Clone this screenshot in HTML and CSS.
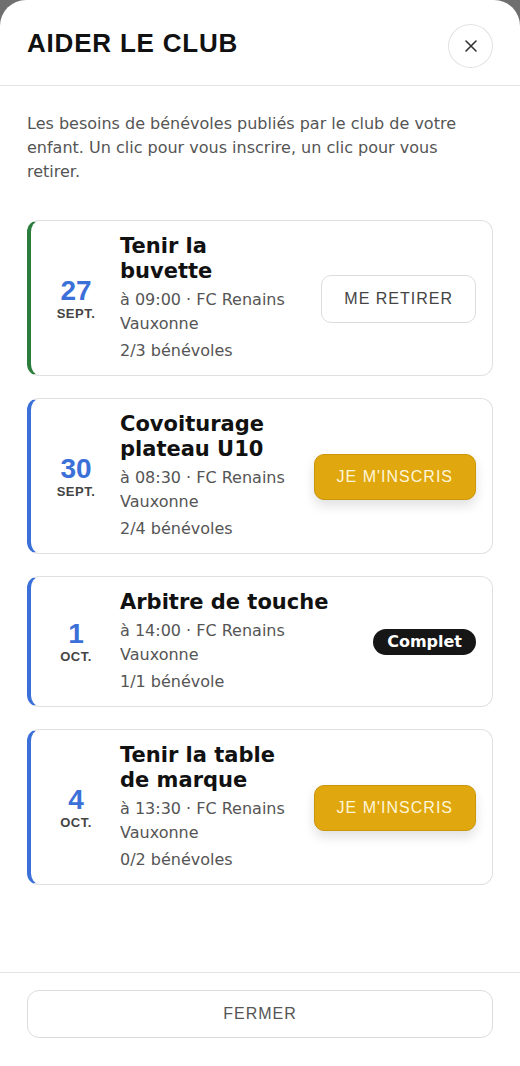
FILE: index.html
```html
<!DOCTYPE html>
<html lang="fr">
  <head>
    <meta charset="UTF-8" />
    <meta name="viewport" content="width=device-width, initial-scale=1" />
    <title>Aider le club</title>
    <link rel="stylesheet" href="styles.css">
  </head>
  <body>
    <div class="sheet">
      <div class="sheet-header">
        <h1>AIDER LE CLUB</h1>
        <button class="close-btn" aria-label="Fermer">
          <svg width="14" height="14" viewBox="0 0 14 14"><path d="M2 2L12 12M12 2L2 12" stroke="#333" stroke-width="1.6" stroke-linecap="round" /></svg>
        </button>
      </div>

      <div class="sheet-body">
        <p class="intro">Les besoins de bénévoles publiés par le club de votre enfant. Un clic pour vous inscrire, un clic pour vous retirer.</p>

        <div class="need-list">
          <div class="need-card joined">
            <div class="need-date">
              <div class="day">27</div>
              <div class="month">SEPT.</div>
            </div>
            <div class="need-info">
              <div class="need-title">Tenir la buvette</div>
              <div class="need-meta">à 09:00 · FC Renains Vauxonne</div>
              <div class="need-count">2/3 bénévoles</div>
            </div>
            <button class="btn btn-outline">ME RETIRER</button>
          </div>

          <div class="need-card">
            <div class="need-date">
              <div class="day">30</div>
              <div class="month">SEPT.</div>
            </div>
            <div class="need-info">
              <div class="need-title">Covoiturage plateau U10</div>
              <div class="need-meta">à 08:30 · FC Renains Vauxonne</div>
              <div class="need-count">2/4 bénévoles</div>
            </div>
            <button class="btn btn-primary">JE M'INSCRIS</button>
          </div>

          <div class="need-card">
            <div class="need-date">
              <div class="day">1</div>
              <div class="month">OCT.</div>
            </div>
            <div class="need-info">
              <div class="need-title">Arbitre de touche</div>
              <div class="need-meta">à 14:00 · FC Renains Vauxonne</div>
              <div class="need-count">1/1 bénévole</div>
            </div>
            <span class="badge-full">Complet</span>
          </div>

          <div class="need-card">
            <div class="need-date">
              <div class="day">4</div>
              <div class="month">OCT.</div>
            </div>
            <div class="need-info">
              <div class="need-title">Tenir la table de marque</div>
              <div class="need-meta">à 13:30 · FC Renains Vauxonne</div>
              <div class="need-count">0/2 bénévoles</div>
            </div>
            <button class="btn btn-primary">JE M'INSCRIS</button>
          </div>
        </div>
      </div>

      <div class="sheet-footer">
        <button class="btn btn-outline btn-block">FERMER</button>
      </div>
    </div>
  </body>
</html>
```

FILE: styles.css
```css
html, body {
  margin: 0;
  height: 100%;
}
body {
  background: #6f6f6f;
  font-family: "DejaVu Sans", sans-serif;
  color: #111;
}
.sheet {
  height: 1066px;
  background: #fff;
  border-radius: 26px 26px 0 0;
  display: flex;
  flex-direction: column;
  box-sizing: border-box;
}
.sheet-header {
  display: flex;
  align-items: center;
  justify-content: space-between;
  padding: 24px 27px 17px 27px;
  border-bottom: 1px solid #e4e4e4;
}
.sheet-header h1 {
  margin: -5px 0 0 0;
  font-family: "Liberation Sans", Arial, sans-serif;
  font-size: 26px;
  font-weight: bold;
  letter-spacing: 0.8px;
  color: #111;
}
.close-btn {
  width: 45px;
  height: 44px;
  border-radius: 50%;
  border: 1px solid #e2e2e2;
  background: #fff;
  display: flex;
  align-items: center;
  justify-content: center;
  padding: 0;
}
.sheet-body {
  flex: 1;
  padding: 26px 27px 0 27px;
}
.intro {
  margin: 0 0 36px 0;
  font-size: 16px;
  line-height: 24px;
  color: #555;
}
.need-list {
  display: flex;
  flex-direction: column;
  gap: 22px;
}
.need-card {
  display: flex;
  align-items: center;
  gap: 16px;
  padding: 13px 16px 12px 17px;
  border: 1px solid #e0e0e0;
  border-left: 4px solid #3b70d8;
  border-radius: 12px;
}
.need-card.joined {
  border-left-color: #2a7d3c;
}
.need-date {
  width: 56px;
  flex-shrink: 0;
  text-align: center;
}
.need-date .day {
  font-family: "Liberation Sans", Arial, sans-serif;
  font-size: 28px;
  line-height: 30px;
  font-weight: bold;
  color: #3b70d8;
}
.need-date .month {
  font-family: "Liberation Sans", Arial, sans-serif;
  font-size: 13px;
  line-height: 16px;
  font-weight: bold;
  letter-spacing: 0.5px;
  color: #444;
}
.need-info {
  flex: 1;
  min-width: 0;
}
.need-title {
  font-size: 21px;
  line-height: 25px;
  font-weight: bold;
  color: #111;
  margin-bottom: 4px;
}
.need-meta {
  font-size: 16px;
  line-height: 24px;
  color: #555;
}
.need-count {
  font-size: 16px;
  line-height: 24px;
  color: #555;
  margin-top: 3px;
}
.btn {
  flex-shrink: 0;
  font-family: "Liberation Sans", Arial, sans-serif;
  font-size: 16px;
  letter-spacing: 1px;
  border-radius: 10px;
  padding: 0 22px;
  height: 48px;
  cursor: pointer;
}
.btn-outline {
  background: #fff;
  border: 1px solid #dcdcdc;
  color: #444;
}
.btn-primary {
  height: 46px;
  background: #e0a70f;
  border: 1px solid #c9960c;
  color: #fff6d8;
  box-shadow: 0 6px 12px rgba(0, 0, 0, 0.12);
}
.btn-block {
  width: 100%;
  border-radius: 12px;
  color: #555;
}
.badge-full {
  flex-shrink: 0;
  background: #161616;
  color: #fff;
  font-size: 16px;
  font-weight: bold;
  line-height: 26px;
  padding: 0 14px;
  border-radius: 13px;
}
.sheet-footer {
  padding: 17px 27px 28px 27px;
  border-top: 1px solid #e4e4e4;
}
```
